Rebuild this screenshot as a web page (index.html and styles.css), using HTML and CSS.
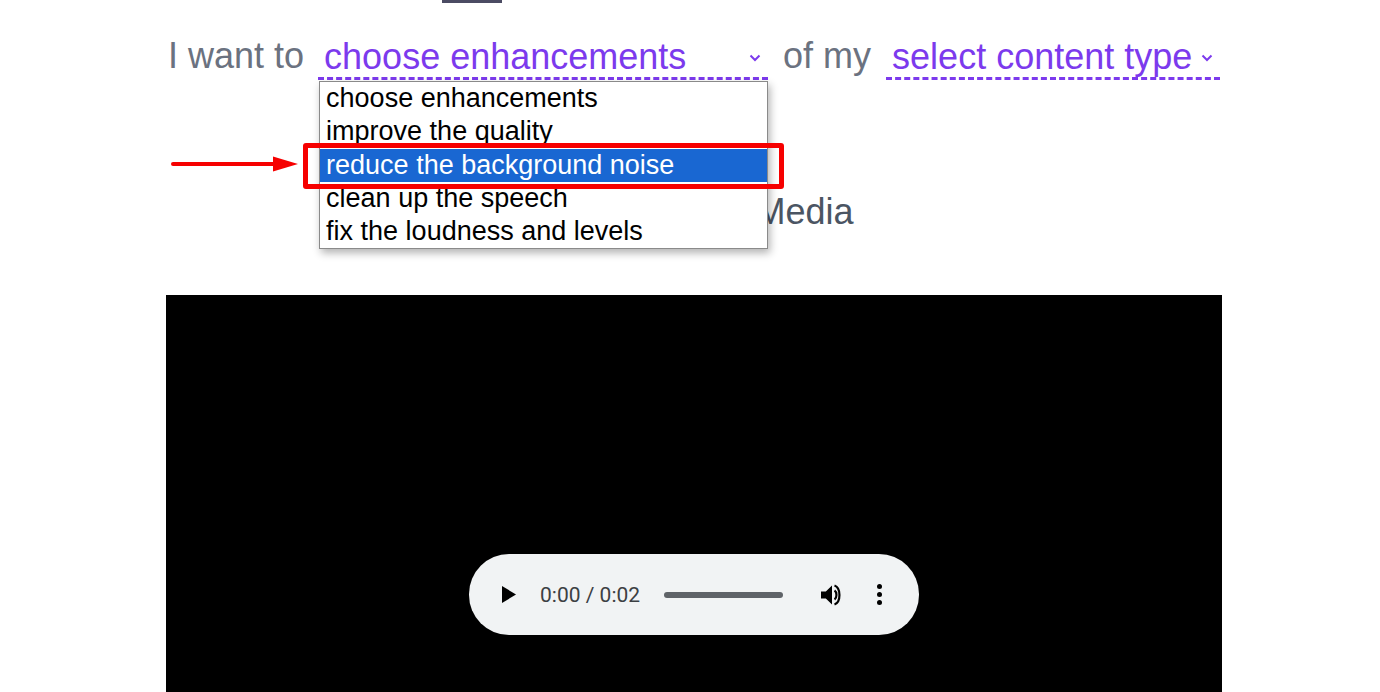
FILE: index.html
```html
<!DOCTYPE html>
<html>
<head>
  <title>Enhance</title>
  <link rel="stylesheet" href="styles.css">
</head>
<body>

  <div class="container">
    <div class="tab-mark"></div>

    <div class="sentence">
      <span class="word">I want to</span>
      <div class="picker picker-enhance">
        <span>choose enhancements</span>
        <svg class="chevron" viewBox="0 0 12 8"><path d="M1.5 1.5 6 6l4.5-4.5" /></svg>
        <ul class="dropdown">
          <li>choose enhancements</li>
          <li>improve the quality</li>
          <li class="selected">reduce the background noise</li>
          <li>clean up the speech</li>
          <li>fix the loudness and levels</li>
        </ul>
        <div class="callout"></div>
        <svg class="arrow" viewBox="0 0 127 16"><path d="M2 8h100" /><polygon points="102,0.5 127,8 102,15.5" /></svg>
      </div>
      <span class="word">of my</span>
      <div class="picker picker-type">
        <span>select content type</span>
        <svg class="chevron" viewBox="0 0 12 8"><path d="M1.5 1.5 6 6l4.5-4.5" /></svg>
      </div>
    </div>

    <h2 class="upload-title">Upload Your Media</h2>

    <div class="video">
      <div class="player">
        <svg class="play" viewBox="0 0 14 17"><polygon points="0,0 14,8.5 0,17" /></svg>
        <span class="time">0:00 / 0:02</span>
        <div class="track"></div>
        <svg class="volume" viewBox="0 0 24 24"><path d="M1 8.5v7h4.8l6.2 6V2.5l-6.2 6H1z" /><path class="wave" d="M14.5 7.5c2.6 1.6 2.6 7.4 0 9" /><path class="wave" d="M14.5 2.5c6.6 2.4 6.6 16.6 0 19" /></svg>
        <div class="dots"><i></i><i></i><i></i></div>
      </div>
    </div>
  </div>

</body>
</html>
```

FILE: styles.css
```css
body {
  font-family: "Liberation Sans", Arial, sans-serif;
  margin: 0;
  background-color: #fff;
  overflow: hidden;
}

.container {
  width: 1056px;
  height: 692px;
  margin-left: 166px;
  display: flex;
  flex-direction: column;
}

.tab-mark {
  width: 60px;
  height: 3px;
  margin-left: 276px;
  background-color: #4b4b63;
}

.sentence {
  display: flex;
  align-items: flex-start;
  margin-top: 33px;
  height: 44px;
  font-size: 36px;
  line-height: 40px;
}

.word {
  color: #6b7280;
  padding-left: 2px;
}

.picker {
  position: relative;
  display: flex;
  justify-content: space-between;
  align-items: center;
  height: 41px;
  color: #7c3aed;
  border-bottom: 3px dashed #7c3aed;
  padding: 0 7px 0 6px;
}

.picker-enhance {
  width: 437px;
  margin-left: 14px;
  margin-right: 13px;
}

.picker-type {
  width: 321px;
  margin-left: 15px;
}

.chevron {
  width: 12px;
  height: 8px;
  margin-top: 3px;
  fill: none;
  stroke: #7c3aed;
  stroke-width: 2;
}

.dropdown {
  position: absolute;
  z-index: 2;
  top: 45px;
  left: 1px;
  width: 447px;
  margin: 0;
  padding: 0;
  list-style: none;
  background-color: #fff;
  border: 1px solid #8a8a8a;
  box-shadow: 2px 4px 8px rgba(0, 0, 0, 0.3);
  font-size: 27px;
  line-height: 33px;
  color: #000;
}

.dropdown li {
  padding-left: 6px;
  height: 33.3px;
}

.dropdown .selected {
  background-color: #1967d2;
  color: #fff;
}

.callout {
  position: absolute;
  z-index: 3;
  top: 107px;
  left: -15px;
  width: 471px;
  height: 36px;
  border: 5px solid #f60000;
  border-radius: 3px;
}

.arrow {
  position: absolute;
  z-index: 3;
  top: 120px;
  left: -147px;
  width: 127px;
  height: 16px;
  fill: #f60000;
  stroke: none;
}

.arrow path {
  stroke: #f60000;
  stroke-width: 4;
  stroke-linecap: round;
}

.upload-title {
  margin: 112px 0 0;
  padding-left: 15px;
  text-align: center;
  font-size: 36px;
  line-height: 40px;
  font-weight: normal;
  color: #4b5563;
}

.video {
  flex: 1;
  margin-top: 63px;
  background-color: #000;
  display: flex;
  justify-content: center;
  align-items: flex-end;
  padding-bottom: 57px;
}

.player {
  width: 450px;
  height: 81px;
  border-radius: 40px;
  background-color: #f1f3f4;
  display: flex;
  align-items: center;
  box-sizing: border-box;
  padding-left: 33px;
  font-family: Roboto, Arial, sans-serif;
}

.play {
  width: 14px;
  height: 17px;
  fill: #000;
}

.time {
  margin-left: 24px;
  font-size: 21px;
  color: #3c4043;
}

.track {
  width: 119px;
  height: 6px;
  margin-left: 24px;
  border-radius: 3px;
  background-color: #5f6368;
}

.volume {
  width: 24px;
  height: 24px;
  margin-left: 37px;
  fill: #000;
}

.volume .wave {
  fill: none;
  stroke: #000;
  stroke-width: 2.2;
}

.dots {
  display: flex;
  flex-direction: column;
  gap: 3px;
  margin-left: 33px;
}

.dots i {
  display: block;
  width: 5px;
  height: 5px;
  border-radius: 50%;
  background-color: #000;
}
```
